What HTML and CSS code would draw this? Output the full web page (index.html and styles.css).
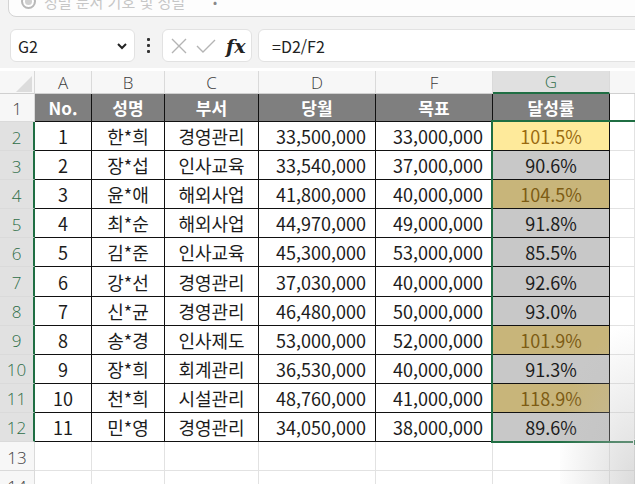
FILE: index.html
```html
<!DOCTYPE html>
<html lang="ko">
<head>
<meta charset="utf-8">
<link rel="stylesheet" href="styles.css">
</head>
<body>
<div class="topstrip">
  <div class="searchbox"><span class="radio"></span><span class="stext">정렬 문서 기호 및 정렬</span><span class="sdot">•</span></div>
</div>
<div class="fbar">
  <div class="namebox"><span>G2</span>
    <svg class="chev" width="12" height="8" viewBox="0 0 12 8"><path d="M2 2 L6 6 L10 2" fill="none" stroke="#222" stroke-width="2"/></svg>
  </div>
  <div class="dots"><span></span><span></span><span></span></div>
  <div class="fxbox">
    <svg width="20" height="20" viewBox="0 0 20 20"><path d="M3 3 L17 17 M17 3 L3 17" stroke="#b4b4b4" stroke-width="1.4" fill="none"/></svg>
    <svg width="22" height="20" viewBox="0 0 22 20"><path d="M2 10 L8 16 L20 4" stroke="#b4b4b4" stroke-width="1.4" fill="none"/></svg>
    <span class="fx">fx</span>
  </div>
  <div class="formula">=D2/F2</div>
</div>
<div class="sheet">
  <div class="corner"><svg width="16" height="16" viewBox="0 0 16 16"><path d="M16 0 L16 16 L0 16 Z" fill="#dcdcdc"/></svg></div>
  <div class="ch">A</div><div class="ch">B</div><div class="ch">C</div><div class="ch">D</div><div class="ch">F</div><div class="ch sel">G</div><div class="ch blank"></div>

  <div class="rh">1</div>
  <div class="c hd">No.</div><div class="c hd">성명</div><div class="c hd">부서</div><div class="c hd">당월</div><div class="c hd">목표</div><div class="c hd">달성률</div><div class="e"></div>

  <div class="rh sel">2</div><div class="c">1</div><div class="c">한*희</div><div class="c">경영관리</div><div class="c n">33,500,000</div><div class="c n">33,000,000</div><div class="c p yel">101.5%</div><div class="e"></div>
  <div class="rh sel">3</div><div class="c">2</div><div class="c">장*섭</div><div class="c">인사교육</div><div class="c n">33,540,000</div><div class="c n">37,000,000</div><div class="c p">90.6%</div><div class="e"></div>
  <div class="rh sel">4</div><div class="c">3</div><div class="c">윤*애</div><div class="c">해외사업</div><div class="c n">41,800,000</div><div class="c n">40,000,000</div><div class="c p gold">104.5%</div><div class="e"></div>
  <div class="rh sel">5</div><div class="c">4</div><div class="c">최*순</div><div class="c">해외사업</div><div class="c n">44,970,000</div><div class="c n">49,000,000</div><div class="c p">91.8%</div><div class="e"></div>
  <div class="rh sel">6</div><div class="c">5</div><div class="c">김*준</div><div class="c">인사교육</div><div class="c n">45,300,000</div><div class="c n">53,000,000</div><div class="c p">85.5%</div><div class="e"></div>
  <div class="rh sel">7</div><div class="c">6</div><div class="c">강*선</div><div class="c">경영관리</div><div class="c n">37,030,000</div><div class="c n">40,000,000</div><div class="c p">92.6%</div><div class="e"></div>
  <div class="rh sel">8</div><div class="c">7</div><div class="c">신*균</div><div class="c">경영관리</div><div class="c n">46,480,000</div><div class="c n">50,000,000</div><div class="c p">93.0%</div><div class="e"></div>
  <div class="rh sel">9</div><div class="c">8</div><div class="c">송*경</div><div class="c">인사제도</div><div class="c n">53,000,000</div><div class="c n">52,000,000</div><div class="c p gold">101.9%</div><div class="e"></div>
  <div class="rh sel">10</div><div class="c">9</div><div class="c">장*희</div><div class="c">회계관리</div><div class="c n">36,530,000</div><div class="c n">40,000,000</div><div class="c p">91.3%</div><div class="e"></div>
  <div class="rh sel">11</div><div class="c">10</div><div class="c">천*희</div><div class="c">시설관리</div><div class="c n">48,760,000</div><div class="c n">41,000,000</div><div class="c p gold">118.9%</div><div class="e"></div>
  <div class="rh sel">12</div><div class="c">11</div><div class="c">민*영</div><div class="c">경영관리</div><div class="c n">34,050,000</div><div class="c n">38,000,000</div><div class="c p">89.6%</div><div class="e"></div>

  <div class="rh">13</div><div class="e"></div><div class="e"></div><div class="e"></div><div class="e"></div><div class="e"></div><div class="e"></div><div class="e"></div>
  <div class="rh">14</div><div class="e"></div><div class="e"></div><div class="e"></div><div class="e"></div><div class="e"></div><div class="e"></div><div class="e"></div>

  <div class="selbox"><span class="handle"></span></div>
</div>
<div class="shade"></div>
</body>
</html>
```

FILE: styles.css
```css
* { box-sizing: border-box; }
html, body { margin: 0; padding: 0; }
body {
  position: relative;
  width: 635px;
  height: 484px;
  overflow: hidden;
  background: #ffffff;
  font-family: "Noto Sans CJK KR", "Noto Sans", sans-serif;
  color: #1a1a1a;
}

.topstrip {
  height: 18px;
  background: #f3f3f3;
  overflow: hidden;
  padding-left: 8px;
}
.searchbox {
  margin-top: -15px;
  height: 32px;
  border: 1px solid #d4d4d4;
  border-radius: 8px;
  background: #fdfdfd;
  display: flex;
  align-items: center;
  gap: 8px;
  padding-left: 12px;
  margin-right: -20px;
}
.radio {
  width: 15px;
  height: 15px;
  border-radius: 50%;
  border: 2px solid #b8b8b8;
  box-shadow: inset 0 0 0 2px #fff, inset 0 0 0 8px #d0d0d0;
}
.stext { color: #c6c6c6; font-size: 15px; }
.sdot { color: #888; font-size: 12px; margin-left: 20px; }

.fbar {
  height: 50px;
  background: #f3f3f3;
  display: flex;
  align-items: center;
  padding: 5px 0 0 10px;
  overflow: hidden;
}
.namebox {
  width: 125px;
  height: 33px;
  background: #ffffff;
  border: 1px solid #e2e2e2;
  border-radius: 6px;
  display: flex;
  align-items: center;
  justify-content: space-between;
  padding: 0 6px 0 7px;
  font-size: 16px;
  color: #222;
}
.dots {
  width: 27px;
  display: flex;
  flex-direction: column;
  align-items: center;
  gap: 3px;
}
.dots span { width: 3px; height: 3px; background: #333; border-radius: 1px; }
.fxbox {
  width: 90px;
  height: 33px;
  background: #ffffff;
  border: 1px solid #e2e2e2;
  border-radius: 6px;
  display: flex;
  align-items: center;
  padding-left: 6px;
  gap: 6px;
}
.fx {
  font-family: "DejaVu Serif", "Liberation Serif", serif;
  font-style: italic;
  font-weight: bold;
  font-size: 19px;
  color: #222;
  margin-left: 3px;
}
.formula {
  flex: 1;
  height: 33px;
  margin-left: 6px;
  margin-right: -10px;
  background: #ffffff;
  border: 1px solid #e2e2e2;
  border-radius: 6px;
  display: flex;
  align-items: center;
  padding-left: 13px;
  font-size: 16px;
  color: #222;
}

.sheet {
  position: relative;
  margin-top: 3px;
  display: grid;
  grid-template-columns: 35px 57px 73px 94px 117px 117px 117px 25px;
  grid-template-rows: 23px 28px repeat(11, 29.1px) 29px 29px;
  font-size: 16px;
}
.corner {
  background: #f7f7f7;
  border-right: 1px solid #d8d8d8;
  border-bottom: 1px solid #d0d0d0;
  display: flex;
  align-items: flex-end;
  justify-content: flex-end;
  padding: 0 2px 1px 0;
}
.ch {
  background: #f7f7f7;
  border-right: 1px solid #dadada;
  border-bottom: 1px solid #d0d0d0;
  display: flex;
  align-items: center;
  justify-content: center;
  font-family: "Open Sans", "Noto Sans", sans-serif;
  font-weight: 300;
  font-size: 17px;
  color: #3c3c3c;
}
.ch.sel {
  background: #e0e0e0;
  color: #2e6e48;
  border-bottom: 2px solid #1f6e43;
}
.ch.blank { background: #f7f7f7; border-right: none; }
.rh {
  background: #f7f7f7;
  border-right: 1px solid #dadada;
  border-bottom: 1px solid #dadada;
  display: flex;
  align-items: center;
  justify-content: center;
  font-family: "Open Sans", "Noto Sans", sans-serif;
  font-weight: 300;
  font-size: 17px;
  color: #3c3c3c;
  padding-top: 2px;
}
.rh.sel {
  background: #e1e1e1;
  color: #2e6e48;
  border-right: 2px solid #1f6e43;
}
.c {
  border-right: 1px solid #111;
  border-bottom: 1px solid #111;
  display: flex;
  align-items: center;
  justify-content: center;
  font-size: 18px;
  color: #1c1c1c;
  background: #ffffff;
  white-space: nowrap;
}
.c.hd {
  background: #7f7f7f;
  color: #ffffff;
  font-weight: bold;
  font-size: 17px;
}
.c.n { justify-content: flex-end; padding-right: 9px; }
.c.p { background: #c8c8c8; }
.c.yel { background: #feea9b; color: #9a6a10; }
.c.gold { background: #c8b57a; color: #7d5c14; }
.e {
  border-right: 1px solid #e2e2e2;
  border-bottom: 1px solid #e2e2e2;
}
.selbox {
  position: absolute;
  grid-column: 7;
  grid-row: 3 / span 11;
  left: -2px;
  top: -2px;
  right: -2px;
  bottom: -1px;
  border: 2px solid #1f6e43;
  pointer-events: none;
}
.handle {
  position: absolute;
  right: -5px;
  bottom: -5px;
  width: 7px;
  height: 7px;
  background: #1f6e43;
  border: 1px solid #fff;
}
.shade {
  position: absolute;
  left: 560px;
  top: 300px;
  width: 75px;
  height: 184px;
  background: radial-gradient(ellipse 80px 160px at 100% 100%, rgba(190,190,190,0.55), rgba(220,220,220,0) 100%);
  pointer-events: none;
}
```
